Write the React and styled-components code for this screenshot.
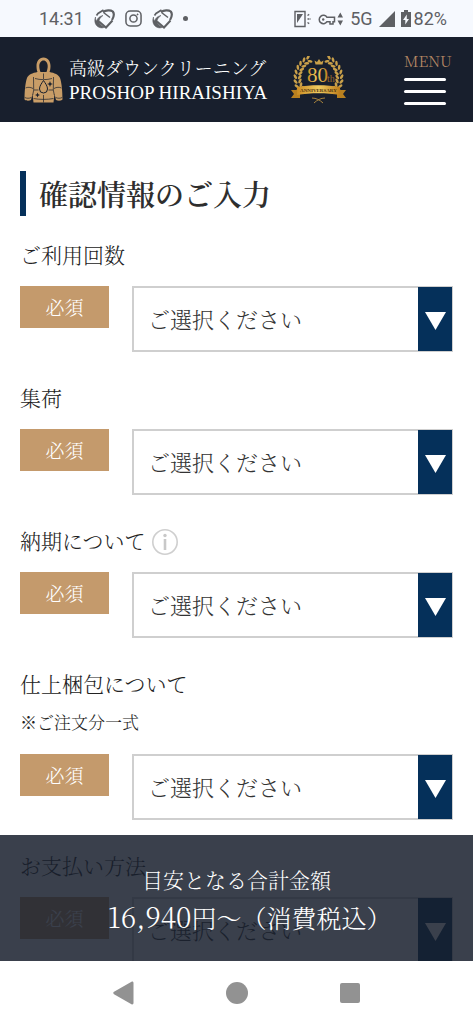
import React from "react";
import styled, { createGlobalStyle } from "styled-components";

const navy = "#05305a";
const ink = "#181f2d";
const gold = "#c49a6c";

const GlobalStyle = createGlobalStyle`
  *, *::before, *::after { box-sizing: border-box; }
  body {
    margin: 0;
    background: #fff;
    color: #222;
    font-family: "Noto Serif CJK JP", "Liberation Serif", "Noto Sans CJK JP", serif;
    font-weight: 300;
  }
`;

const Screen = styled.div`
  display: flex;
  flex-direction: column;
  height: 100vh;
`;

const StatusBar = styled.div`
  display: flex;
  align-items: center;
  justify-content: space-between;
  height: 37px;
  padding: 0 26px 0 39px;
  background: #f6f9fe;
  color: #5e6064;
  font: 400 18px/37px Roboto, sans-serif;
  flex-shrink: 0;
`;

const StatusGroup = styled.div`
  display: flex;
  align-items: center;
  gap: ${(p) => p.$gap}px;
  svg { display: block; }
`;

const Header = styled.header`
  display: flex;
  align-items: center;
  height: 85px;
  padding: 0 22px 0 24px;
  background: ${ink};
  color: #fff;
  flex-shrink: 0;
`;

const Brand = styled.a`
  display: flex;
  align-items: center;
  gap: 6px;
  color: inherit;
  text-decoration: none;
  white-space: nowrap;
`;

const BrandText = styled.span`
  display: flex;
  flex-direction: column;
`;

const Tagline = styled.span`
  font-size: 18px;
  line-height: 26px;
`;

const BrandName = styled.span`
  font-family: "Liberation Serif", serif;
  font-size: 19px;
  line-height: 26px;
`;

const Emblem = styled.svg`
  display: block;
  margin-left: 24px;
  flex-shrink: 0;
`;

const MenuButton = styled.button`
  display: flex;
  flex-direction: column;
  gap: 9px;
  width: 47px;
  margin-left: auto;
  padding: 0 0 2px;
  border: 0;
  background: none;
  color: #b98a66;
  font: inherit;
  font-size: 15px;
  line-height: 16px;
`;

const MenuLine = styled.span`
  width: 42px;
  height: 3px;
  border-radius: 2px;
  background: #fff;
`;

const Stage = styled.div`
  position: relative;
  flex: 1;
  min-height: 0;
`;

const Scroller = styled.main`
  height: 100%;
  overflow-y: auto;
  scrollbar-width: none;
  padding: 49px 20px 126px;
`;

const Title = styled.h1`
  margin: 0 0 23px;
  padding-left: 13px;
  border-left: 6px solid ${navy};
  color: #2e2e2e;
  font-size: 29px;
  line-height: 45px;
  font-weight: 600;
`;

const Field = styled.div`
  margin-bottom: 30px;
`;

const LabelLine = styled.div`
  display: flex;
  gap: 5px;
  height: 30px;
  font-size: 21px;
  line-height: 30px;
`;

const Note = styled.p`
  margin: 12px 0 20px;
  font-size: 17px;
  line-height: 24px;
`;

const InfoButton = styled.button`
  display: block;
  height: 30px;
  padding: 0;
  border: 0;
  background: none;
  svg { display: block; }
`;

const Control = styled.div`
  display: flex;
  align-items: flex-start;
  gap: 23px;
  margin-top: 17px;
`;

const Required = styled.span`
  width: 89px;
  flex-shrink: 0;
  background: ${gold};
  color: #fff;
  font-size: 19px;
  line-height: 42px;
  text-align: center;
`;

const SelectBox = styled.div`
  display: grid;
  flex: 1;
  > * { grid-area: 1 / 1; }
`;

const Select = styled.select`
  appearance: none;
  width: 100%;
  height: 66px;
  padding: 0 50px 2px 14px;
  border: 2px solid #cfcfcf;
  border-radius: 0;
  background: #fff;
  color: #333;
  font: inherit;
  font-size: 22px;
`;

const Arrow = styled.span`
  display: flex;
  align-items: center;
  justify-content: center;
  justify-self: end;
  width: 34px;
  margin: 1px;
  padding-top: 4px;
  background: ${navy};
  pointer-events: none;
`;

const TotalBar = styled.aside`
  position: absolute;
  left: 0;
  right: 0;
  bottom: 0;
  height: 126px;
  padding-top: 28px;
  background: rgba(24, 31, 45, 0.85);
  color: #fff;
  text-align: center;
`;

const TotalCaption = styled.p`
  margin: 0;
  font-size: 21px;
  line-height: 32px;
`;

const TotalAmount = styled.p`
  margin: 0;
  padding-left: 26px;
  font-size: 25px;
  line-height: 42px;
`;

const Digits = styled.span`
  font-size: 28px;
`;

const NavBar = styled.nav`
  display: flex;
  align-items: center;
  justify-content: center;
  gap: 89px;
  height: 63px;
  background: #fff;
  flex-shrink: 0;
`;

const NavButton = styled.button`
  width: 24px;
  height: 24px;
  padding: 0;
  border: 0;
  background: none;
  svg { display: block; }
`;

const OrbitIcon = () => (
  <svg width="21" height="20" viewBox="0 0 21 20" fill="none" stroke="#5e6064" aria-hidden="true">
    <path d="M2.500 6.500 4 4.500 9.500 1" strokeWidth="1.700" />
    <path d="M1.500 8C0 12 1 16.500 5 18.300c2.500 1 5 .7 6.500-.8-2 0-3.500-.5-4.500-1.500-1.500-1.200-2.200-3-1.800-5C6 9 7.500 7.500 9 6.500 6 7 3.500 9 2.500 12c-.8-.8-1.200-2.500-1-4z" fill="#5e6064" strokeWidth=".6" />
    <path d="M5 12.500 12 18.500 18.500 11.500" strokeWidth="2" />
    <path d="M9 3C12 1 16.500.7 18.800 2.500c1.500 2 1 5.500-.8 8.500" strokeWidth="2.200" />
    <path d="M9.500 3.500 16 8.500" strokeWidth="1.500" />
  </svg>
);

const CameraIcon = () => (
  <svg width="17" height="17" viewBox="0 0 18 18" fill="none" stroke="#5e6064" strokeWidth="1.600" aria-hidden="true">
    <rect x="1" y="1" width="16" height="16" rx="4.500" />
    <circle cx="9" cy="9" r="3.800" />
    <circle cx="13.300" cy="4.700" r=".6" fill="#5e6064" strokeWidth=".8" />
  </svg>
);

const StatusDot = styled.span`
  width: 5px;
  height: 5px;
  border-radius: 50%;
  background: #5e6064;
`;

const PhoneIcon = () => (
  <svg width="18" height="18" viewBox="0 0 18 18" fill="none" stroke="#5e6064" strokeWidth="1.400" aria-hidden="true">
    <path d="M1 1.500h10v15H1z" />
    <path d="M3 4h6L3 13z" fill="#5e6064" stroke="none" />
    <path d="M13.500 5.500 16 4M13.500 9H17M13.500 12.500 16 14" strokeDasharray="2 1" />
  </svg>
);

const KeyIcon = () => (
  <svg width="26" height="16" viewBox="0 0 26 16" fill="none" stroke="#5e6064" strokeWidth="1.500" aria-hidden="true">
    <path d="M9 6.300A4.200 4.200 0 1 0 9 10.700H12V13h3v-2.300h1.500V6.300z" />
    <circle cx="5.200" cy="8.500" r="1.200" fill="#5e6064" stroke="none" />
    <path d="M19.500 6.500 22.300 1.500 25 6.500zM19.500 9.500 22.300 14.500 25 9.500z" fill="#5e6064" stroke="none" />
  </svg>
);

const SignalIcon = () => (
  <svg width="16" height="16" viewBox="0 0 16 16" fill="#5e6064" aria-hidden="true">
    <path d="M16 0v16H0z" />
  </svg>
);

const BatteryIcon = () => (
  <svg width="10" height="17" viewBox="0 0 10 17" aria-hidden="true">
    <path d="M3 0h4v2h3v15H0V2h3z" fill="#5e6064" />
    <path d="M5.800 4.500 2 10h2.300v4.500L8 9H5.800z" fill="#f6f9fe" />
  </svg>
);

const JacketLogo = () => (
  <svg width="39" height="46" viewBox="0 0 39 46" aria-hidden="true">
    <path
      fillRule="evenodd"
      fill="#c99d67"
      d="M19.500.5c4.500 0 7 4 7 8.500 0 2.500-.4 4.500-1 6 5 1 9 2.500 10.500 6 1.800 5 2.500 14 2.500 21.500-1.500 1.500-4.500 1.500-6.500.5L30.500 37l-1 8.500h-20L8.500 37 7 43c-2 1-5 1-6.500-.5C.5 35 1.200 26 3 21c1.500-3.500 5.500-5 10.500-6-.6-1.500-1-3.500-1-6 0-4.500 2.500-8.500 7-8.500zm0 3C17 3.500 15.300 6 15.300 9c0 2.500.6 4.300 1.200 6h6c.6-1.700 1.200-3.500 1.200-6 0-3-1.700-5.500-4.200-5.500z"
    />
    <g fill="none" stroke={ink} strokeWidth=".7">
      <path d="M11 21.500c5 1.500 12 1.500 17 0M19.500 16.500V22M9.500 20l.2 13-1 5M29.500 20l-.2 13 1 5" />
      <path d="M1.500 31c2-1 5-1 7.500.5M37.500 31c-2-1-5-1-7.500.5M10 33h4.500M24.500 33H29M9.500 41.500c6 1.200 14 1.200 20 0M19.500 38v7.500M.8 40.500c2 1 4.500 1 6.500 0M38.200 40.500c-2 1-4.500 1-6.500 0" />
      <path d="M19.500 23.500c2 3 4 5.500 4 8.500a4 4 0 0 1-8 0c0-3 2-5.500 4-8.500z" strokeWidth="1" />
    </g>
    <path
      fill={ink}
      d="m26 24 .8 2.200L29 27l-2.200.8L26 30l-.8-2.200L23 27l2.200-.8zM13.500 35.500l.7 1.800 1.800.7-1.800.7-.7 1.800-.7-1.800L11 38l1.800-.7z"
    />
  </svg>
);

const leaves = Array.from({ length: 9 }, (_, i) => {
  const degrees = 116 + i * 12;
  const angle = (degrees * Math.PI) / 180;
  return {
    x: 27.5 + Math.cos(angle) * 21,
    y: 22 - Math.sin(angle) * 21,
    turn: 90 - degrees,
  };
});

const LaurelBranch = ({ mirrored }) => (
  <g transform={mirrored ? "matrix(-1 0 0 1 55 0)" : undefined}>
    {leaves.map((leaf, i) => (
      <g key={i} transform={`translate(${leaf.x} ${leaf.y}) rotate(${leaf.turn})`}>
        <ellipse cx="1" cy="-2" rx="2.600" ry="1.300" transform="rotate(-35)" />
        <ellipse cx="1" cy="2" rx="2.600" ry="1.300" transform="rotate(35)" />
      </g>
    ))}
  </g>
);

const AnniversaryEmblem = () => (
  <Emblem width="55" height="48" viewBox="0 0 55 48" role="img" aria-label="80th Anniversary">
    <defs>
      <linearGradient id="goldFill" x1="0" y1="0" x2="1" y2="0">
        <stop offset="0" stopColor="#c98b22" />
        <stop offset=".5" stopColor="#f1cc60" />
        <stop offset="1" stopColor="#bd7d1c" />
      </linearGradient>
    </defs>
    <g fill="#c9a04a">
      <LaurelBranch />
      <LaurelBranch mirrored />
      <path d="M24.500 8.500 23.500 4.500l2.500 1.500 2-3 2 3 2.500-1.500-1 4z" />
    </g>
    <text x="16" y="26" fill="url(#goldFill)" fontFamily="Liberation Serif, serif" fontSize="21">80</text>
    <text x="36" y="26" fill="#9b6a2b" fontFamily="Liberation Serif, serif" fontSize="10">th</text>
    <path d="M0 34h9v8H0l3-4zM55 34h-9v8h9l-3-4z" fill="#b9801f" />
    <path d="M6 31c14-2.500 29-2.500 43 0v8c-14-2.500-29-2.500-43 0z" fill="url(#goldFill)" />
    <text x="27.500" y="36" textAnchor="middle" fill="#4d3210" fontFamily="Liberation Serif, serif" fontWeight="700" fontSize="5">ANNIVERSARY</text>
    <path d="M21 42c4 0 8 2 11 5M34 42c-4 0-8 2-11 5" fill="none" stroke="#a9843d" strokeWidth="1" />
  </Emblem>
);

const InfoIcon = () => (
  <svg width="28" height="30" viewBox="0 0 28 30" aria-hidden="true">
    <circle cx="14" cy="17" r="12.200" fill="none" stroke="#cfcfcf" strokeWidth="1.600" />
    <circle cx="14" cy="10.500" r="1.700" fill="#c8c8c8" />
    <path d="M14 14v11" stroke="#c8c8c8" strokeWidth="2.600" />
  </svg>
);

const fields = [
  { id: "count", label: "ご利用回数" },
  { id: "pickup", label: "集荷" },
  { id: "delivery", label: "納期について", info: true },
  { id: "packing", label: "仕上梱包について", note: "※ご注文分一式" },
  { id: "payment", label: "お支払い方法" },
];

const SelectField = ({ id, label, info, note }) => (
  <Field>
    <LabelLine>
      <label htmlFor={id}>{label}</label>
      {info && (
        <InfoButton type="button" aria-label="詳細">
          <InfoIcon />
        </InfoButton>
      )}
    </LabelLine>
    {note && <Note>{note}</Note>}
    <Control>
      <Required>必須</Required>
      <SelectBox>
        <Select id={id} required defaultValue="">
          <option value="">ご選択ください</option>
        </Select>
        <Arrow>
          <svg width="21" height="18" viewBox="0 0 21 18" fill="#fff" aria-hidden="true">
            <path d="M0 0h21L10.500 18z" />
          </svg>
        </Arrow>
      </SelectBox>
    </Control>
  </Field>
);

export default function App() {
  return (
    <Screen>
      <GlobalStyle />
      <StatusBar>
        <StatusGroup $gap={10}>
          <span>14:31</span>
          <OrbitIcon />
          <CameraIcon />
          <OrbitIcon />
          <StatusDot />
        </StatusGroup>
        <StatusGroup $gap={6}>
          <PhoneIcon />
          <KeyIcon />
          <span>5G</span>
          <SignalIcon />
          <StatusGroup $gap={3}>
            <BatteryIcon />
            <span>82%</span>
          </StatusGroup>
        </StatusGroup>
      </StatusBar>
      <Header>
        <Brand href="#top">
          <JacketLogo />
          <BrandText>
            <Tagline>高級ダウンクリーニング</Tagline>
            <BrandName>PROSHOP HIRAISHIYA</BrandName>
          </BrandText>
        </Brand>
        <AnniversaryEmblem />
        <MenuButton type="button">
          MENU
          <MenuLine />
          <MenuLine />
          <MenuLine />
        </MenuButton>
      </Header>
      <Stage>
        <Scroller>
          <Title>確認情報のご入力</Title>
          {fields.map((field) => (
            <SelectField key={field.id} {...field} />
          ))}
        </Scroller>
        <TotalBar>
          <TotalCaption>目安となる合計金額</TotalCaption>
          <TotalAmount>
            <Digits>16,940</Digits>円〜（消費税込）
          </TotalAmount>
        </TotalBar>
      </Stage>
      <NavBar aria-label="システムナビゲーション">
        <NavButton type="button" aria-label="戻る">
          <svg width="24" height="24" viewBox="0 0 24 24" fill="#929292">
            <path d="M19.500.7c1-.6 2 0 2 1.200v20.200c0 1.200-1 1.800-2 1.200L2 13.200c-1-.6-1-1.800 0-2.400z" />
          </svg>
        </NavButton>
        <NavButton type="button" aria-label="ホーム">
          <svg width="24" height="24" viewBox="0 0 24 24" fill="#929292">
            <circle cx="12" cy="12" r="11" />
          </svg>
        </NavButton>
        <NavButton type="button" aria-label="履歴">
          <svg width="24" height="24" viewBox="0 0 24 24" fill="#929292">
            <rect x="2" y="2" width="20" height="20" rx="2" />
          </svg>
        </NavButton>
      </NavBar>
    </Screen>
  );
}
